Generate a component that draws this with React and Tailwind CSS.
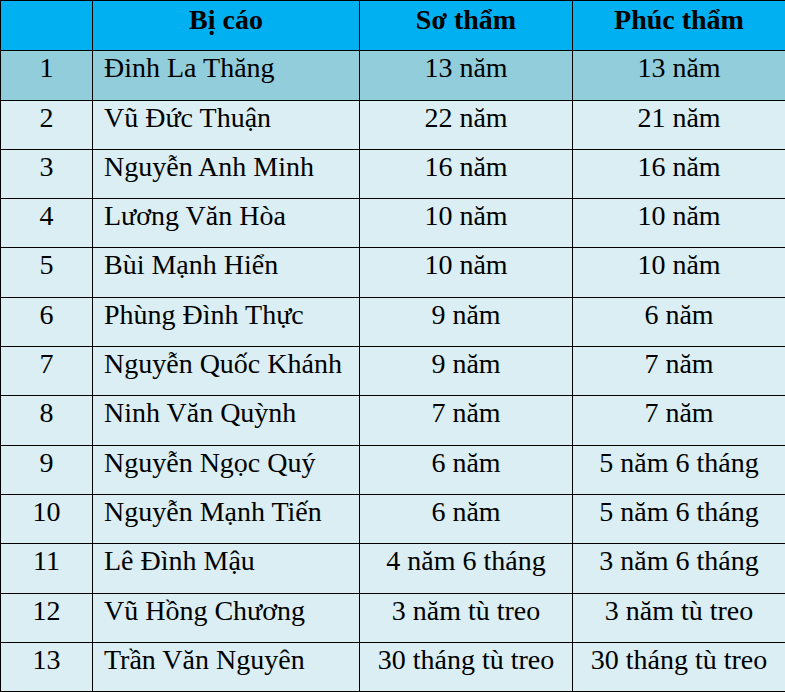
const rows = [
  { n: 1, name: 'Đinh La Thăng', so: '13 năm', phuc: '13 năm', h: 'h-[50px]', hl: true },
  { n: 2, name: 'Vũ Đức Thuận', so: '22 năm', phuc: '21 năm', h: 'h-[49px]' },
  { n: 3, name: 'Nguyễn Anh Minh', so: '16 năm', phuc: '16 năm', h: 'h-[49px]' },
  { n: 4, name: 'Lương Văn Hòa', so: '10 năm', phuc: '10 năm', h: 'h-[49px]' },
  { n: 5, name: 'Bùi Mạnh Hiển', so: '10 năm', phuc: '10 năm', h: 'h-[50px]' },
  { n: 6, name: 'Phùng Đình Thực', so: '9 năm', phuc: '6 năm', h: 'h-[49px]' },
  { n: 7, name: 'Nguyễn Quốc Khánh', so: '9 năm', phuc: '7 năm', h: 'h-[49px]' },
  { n: 8, name: 'Ninh Văn Quỳnh', so: '7 năm', phuc: '7 năm', h: 'h-[50px]' },
  { n: 9, name: 'Nguyễn Ngọc Quý', so: '6 năm', phuc: '5 năm 6 tháng', h: 'h-[49px]' },
  { n: 10, name: 'Nguyễn Mạnh Tiến', so: '6 năm', phuc: '5 năm 6 tháng', h: 'h-[49px]' },
  { n: 11, name: 'Lê Đình Mậu', so: '4 năm 6 tháng', phuc: '3 năm 6 tháng', h: 'h-[50px]' },
  { n: 12, name: 'Vũ Hồng Chương', so: '3 năm tù treo', phuc: '3 năm tù treo', h: 'h-[49px]' },
  { n: 13, name: 'Trần Văn Nguyên', so: '30 tháng tù treo', phuc: '30 tháng tù treo', h: 'h-[49px]' },
];

export default function App(){
  const cell = "border border-black align-top pt-[1px] px-0 whitespace-nowrap";
  const head = "border border-black align-top pt-[3px] text-center";
  return (
    <div className="w-[785px] h-[692px] bg-white overflow-hidden text-black font-['Liberation_Serif',serif]">
      <table className="table-fixed border-collapse w-[785px] text-[28px] leading-[31px] font-['Liberation_Serif',serif]">
        <colgroup>
          <col className="w-[92px]" />
          <col className="w-[267px]" />
          <col className="w-[213px]" />
          <col className="w-[213px]" />
        </colgroup>
        <thead>
          <tr className="h-[50px] bg-[#00b0f0] font-bold">
            <th className={head}></th>
            <th className={head}>Bị cáo</th>
            <th className={head}>Sơ thẩm</th>
            <th className={head}>Phúc thẩm</th>
          </tr>
        </thead>
        <tbody>
          {rows.map(r => (
            <tr key={r.n} className={`${r.h} ${r.hl ? 'bg-[#92cddc]' : 'bg-[#daeef3]'}`}>
              <td className={`${cell} text-center`}>{r.n}</td>
              <td className={`${cell} pl-[11px] text-left`}>{r.name}</td>
              <td className={`${cell} text-center`}>{r.so}</td>
              <td className={`${cell} text-center`}>{r.phuc}</td>
            </tr>
          ))}
        </tbody>
      </table>
    </div>
  );
}
